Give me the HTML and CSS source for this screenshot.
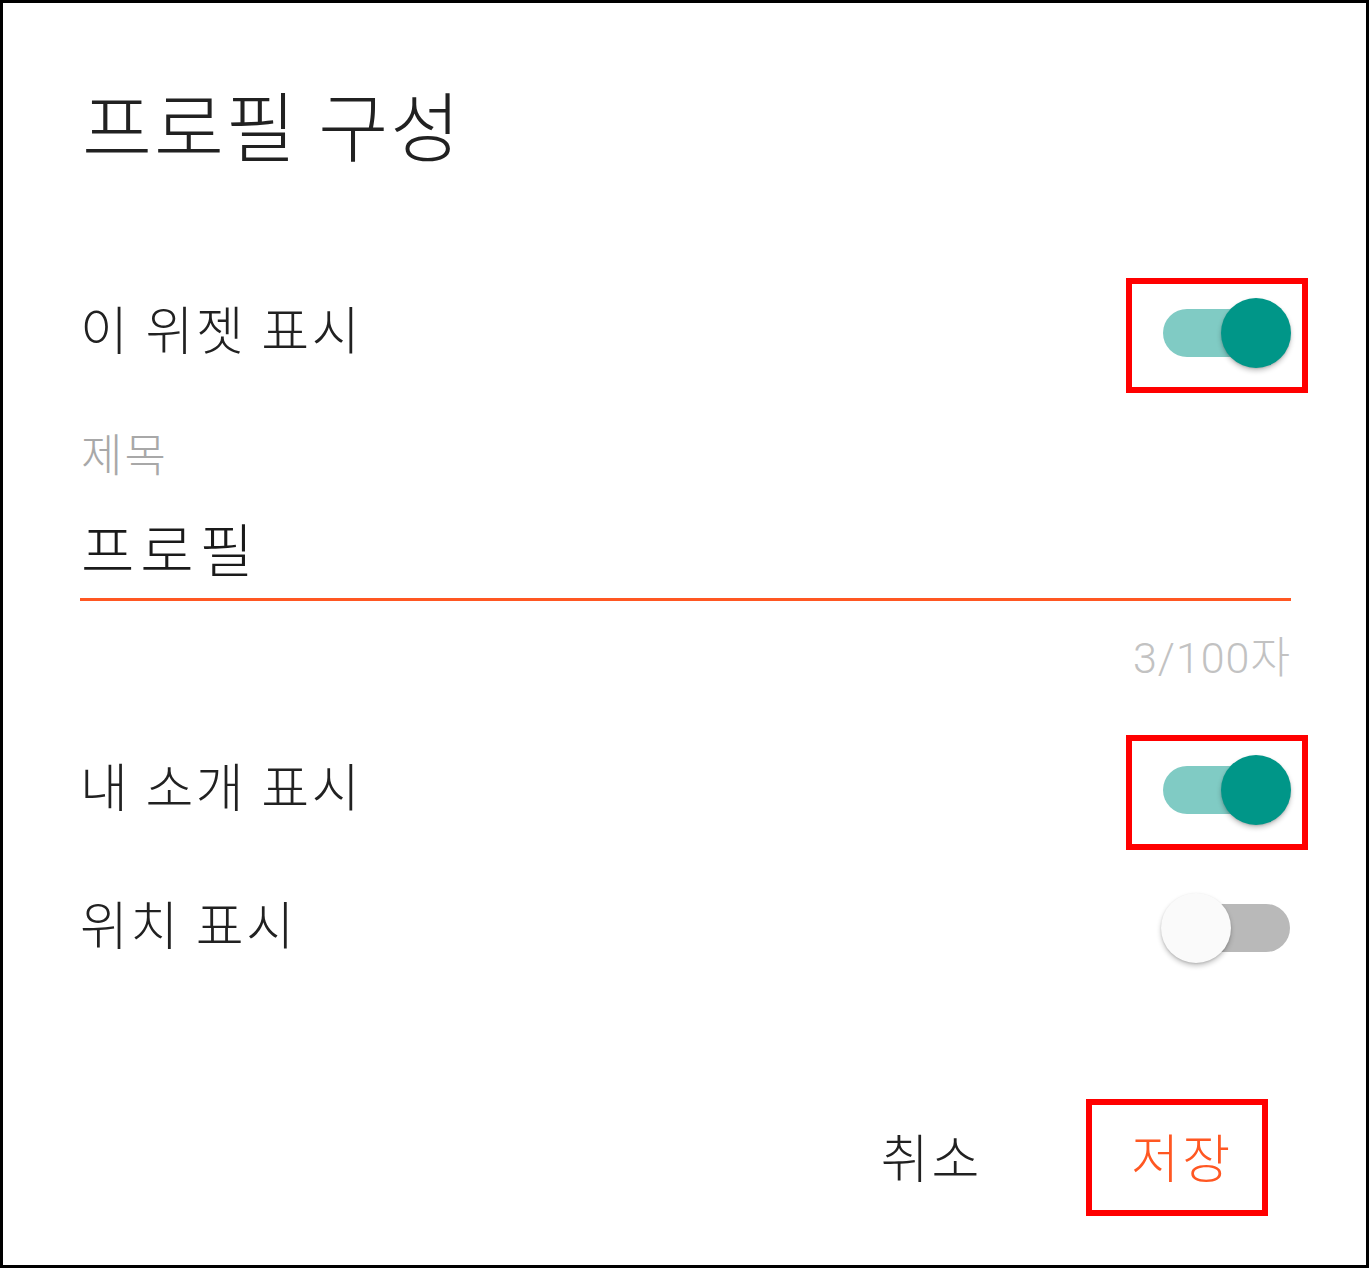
FILE: index.html
```html
<!DOCTYPE html>
<html lang="ko">
<head>
<meta charset="utf-8">
<title>프로필 구성</title>
<link rel="stylesheet" href="styles.css">
</head>
<body>
<div class="frame">
  <h1 class="title">프로필 구성</h1>

  <div class="row row-first">
    <span class="label">이 위젯 표시</span>
    <div class="switch on hl"><div class="track"></div><div class="thumb"></div></div>
  </div>

  <div class="field-label">제목</div>
  <div class="input">프로필</div>
  <div class="counter">3/100자</div>

  <div class="row row-second">
    <span class="label">내 소개 표시</span>
    <div class="switch on hl"><div class="track"></div><div class="thumb"></div></div>
  </div>

  <div class="row row-third">
    <span class="label">위치 표시</span>
    <div class="switch off"><div class="track"></div><div class="thumb"></div></div>
  </div>

  <div class="actions">
    <button class="btn cancel">취소</button>
    <button class="btn save hl-btn">저장</button>
  </div>
</div>
</body>
</html>
```

FILE: styles.css
```css
html, body {
  margin: 0;
  padding: 0;
  background: #ffffff;
}

.frame {
  box-sizing: border-box;
  width: 1369px;
  height: 1268px;
  border: 3px solid #000;
  padding: 77px 75px 0 77px;
  font-family: Roboto, "Noto Sans CJK KR", sans-serif;
  font-weight: 300;
  color: #212121;
  display: flex;
  flex-direction: column;
}

.title {
  margin: 0;
  font-size: 76px;
  font-weight: 300;
  line-height: 100px;
  height: 100px;
  letter-spacing: 2px;
  padding-left: 2px;
}

.row {
  display: flex;
  justify-content: space-between;
  align-items: center;
  height: 70px;
}

.row-first { margin-top: 118px; }
.row-second { margin-top: 72px; }
.row-third { margin-top: 68px; }

.label {
  font-size: 52px;
  line-height: 70px;
  letter-spacing: 2.5px;
  padding-left: 0;
}

.field-label {
  margin-top: 64px;
  font-size: 45px;
  line-height: 50px;
  letter-spacing: 2px;
  color: #a8a8a8;
  padding-left: 1px;
}

.input {
  margin-top: 35px;
  font-size: 58px;
  line-height: 70px;
  letter-spacing: 6px;
  padding-bottom: 11px;
  border-bottom: 3px solid #ff5722;
  color: #1a1a1a;
  padding-left: 1px;
}

.counter {
  margin-top: 32px;
  font-size: 43px;
  line-height: 50px;
  letter-spacing: 1px;
  text-align: right;
  color: #c2c2c2;
}

.switch {
  position: relative;
  width: 130px;
  height: 70px;
  display: flex;
  align-items: center;
}

.track {
  flex: 1;
  height: 48px;
  border-radius: 24px;
  margin: 0 1px 0 2px;
}

.thumb {
  position: absolute;
  top: 0;
  width: 70px;
  height: 70px;
  border-radius: 50%;
  box-shadow: 0 3px 5px rgba(0, 0, 0, 0.22), 0 1px 2px rgba(0, 0, 0, 0.12);
}

.switch.on .track { background: #80cbc4; }
.switch.on .thumb { right: 0; background: #009688; }
.switch.off .track { background: #b9b9b9; }
.switch.off .thumb { left: 0; background: #fafafa; }

.hl::after {
  content: "";
  position: absolute;
  top: -20px;
  bottom: -25px;
  left: -35px;
  right: -17px;
  border: 6px solid #ff0000;
}

.actions {
  margin-top: 163px;
  display: flex;
  justify-content: flex-end;
  gap: 69px;
  padding-right: 18px;
}

.btn {
  position: relative;
  background: none;
  border: none;
  margin: 0;
  padding: 0 40px;
  height: 70px;
  font-family: Roboto, "Noto Sans CJK KR", sans-serif;
  font-weight: 300;
  font-size: 52px;
  line-height: 70px;
  letter-spacing: 3px;
}

.cancel { color: #212121; }
.save { color: #ff5722; }

.hl-btn::after {
  content: "";
  position: absolute;
  top: -27px;
  bottom: -20px;
  left: -5px;
  right: 5px;
  border: 6px solid #ff0000;
}
```
